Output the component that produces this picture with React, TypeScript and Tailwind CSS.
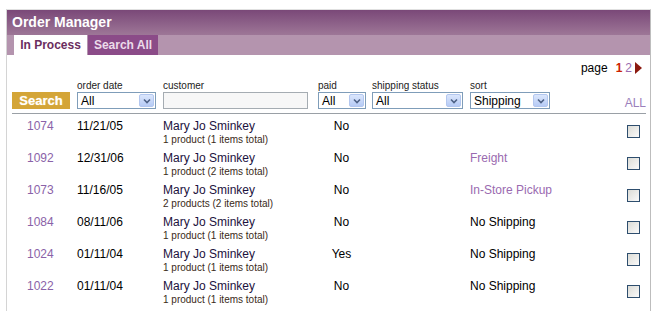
import React from "react";

const rows = [
  { id: "1074", date: "11/21/05", sub: "1 product (1 items total)", paid: "No", ship: "", shipPurple: false },
  { id: "1092", date: "12/31/06", sub: "1 product (2 items total)", paid: "No", ship: "Freight", shipPurple: true },
  { id: "1073", date: "11/16/05", sub: "2 products (2 items total)", paid: "No", ship: "In-Store Pickup", shipPurple: true },
  { id: "1084", date: "08/11/06", sub: "1 product (1 items total)", paid: "No", ship: "No Shipping", shipPurple: false },
  { id: "1024", date: "01/11/04", sub: "1 product (1 items total)", paid: "Yes", ship: "No Shipping", shipPurple: false },
  { id: "1022", date: "01/11/04", sub: "1 product (1 items total)", paid: "No", ship: "No Shipping", shipPurple: false },
];

function Select({ value, w }: { value: string; w: string }) {
  return (
    <div className={`${w} h-[17px] border border-[#7f9db9] bg-white flex items-center justify-between pl-[3px] pr-[1px]`}>
      <span className="text-[12px] leading-[14px] text-black">{value}</span>
      <span className="w-[15px] h-[13px] rounded-[2px] bg-gradient-to-b from-[#dbe6fc] to-[#b6cbf5] border border-[#b3c7ef] flex items-center justify-center">
        <svg width="8" height="6" viewBox="0 0 8 6">
          <path d="M1 1.5 L4 4.5 L7 1.5" stroke="#4d6185" strokeWidth="1.6" fill="none" />
        </svg>
      </span>
    </div>
  );
}

export default function App() {
  return (
    <div className="w-[659px] h-[311px] bg-white overflow-hidden pt-[9px] pl-[6px]" style={{ fontFamily: '"Liberation Sans", Arial, sans-serif' }}>
      <div className="w-[645px] h-[310px] border-l border-t border-r border-l-[#d4d4d4] border-t-[#e0e0e0] border-r-[#bdbdbd]">
        {/* header */}
        <div className="h-[45px] bg-gradient-to-b from-[#7a4878] via-[#9a7294] to-[#b696b0] flex flex-col">
          <div className="h-[25px] pl-[5px] pt-[4px] text-white font-bold text-[14px] leading-[16px]">Order Manager</div>
          <div className="flex pl-[7px] h-[20px] bg-[#b494ae]">
            <div className="w-[73px] h-[20px] bg-white text-[#6b2d5e] font-bold text-[12px] leading-[20px] text-center">In Process</div>
            <div className="w-[70px] h-[20px] bg-[#8b4b88] text-[#ecdcea] font-bold text-[12px] leading-[20px] text-center ml-[1px]">Search All</div>
          </div>
        </div>
        {/* body */}
        <div className="pl-[5px] pr-[4px] pt-[6px]">
          <div className="flex justify-end items-center h-[14px] pr-[4px] text-[12px] leading-[14px]">
            <span className="text-black">page</span>
            <span className="ml-[8px] text-[#cc2200] font-bold">1</span>
            <span className="ml-[3px] text-[#9a6ab0]">2</span>
            <svg className="ml-[3px]" width="7" height="12" viewBox="0 0 7 12">
              <path d="M0 0 L7 6 L0 12 Z" fill="#8b1a10" />
            </svg>
          </div>
          <div className="grid grid-cols-[65px_86px_155px_54px_98px_1fr] mt-[5px]">
            <div />
            <div className="text-[10px] leading-[12px] text-[#222]">order date</div>
            <div className="text-[10px] leading-[12px] text-[#222]">customer</div>
            <div className="text-[10px] leading-[12px] text-[#222]">paid</div>
            <div className="text-[10px] leading-[12px] text-[#222]">shipping status</div>
            <div className="text-[10px] leading-[12px] text-[#222]">sort</div>
            <div className="h-[17px] w-[58px] bg-[#d4a537] text-white font-bold text-[13px] leading-[17px] text-center" style={{ textShadow: "0 0 1px #f3dfa6" }}>Search</div>
            <Select value="All" w="w-[79px]" />
            <div className="w-[145px] h-[17px] border border-[#a5acb2] bg-[#f7f7f7]" />
            <Select value="All" w="w-[48px]" />
            <Select value="All" w="w-[91px]" />
            <div className="flex justify-between items-end">
              <Select value="Shipping" w="w-[80px]" />
              <span className="text-[12px] leading-[14px] text-[#9b80bb] mb-[-1px]">ALL</span>
            </div>
          </div>
          <div className="mt-[4px] border-t border-[#9aa0a6]" />
          {rows.map((r) => (
            <div key={r.id} className="grid grid-cols-[65px_86px_155px_54px_98px_1fr_auto] h-[32px] pt-[5px]">
              <div className="pl-[15px] text-[12px] leading-[14px] text-[#8a62a8]">{r.id}</div>
              <div className="text-[12px] leading-[14px] text-black">{r.date}</div>
              <div>
                <div className="text-[12px] leading-[14px] text-[#1c1240]">Mary Jo Sminkey</div>
                <div className="text-[10px] leading-[12px] text-[#3a2a18] mt-[1px]">{r.sub}</div>
              </div>
              <div className="w-[47px] text-center text-[12px] leading-[14px] text-black">{r.paid}</div>
              <div />
              <div className={`text-[12px] leading-[14px] ${r.shipPurple ? "text-[#9a6ab0]" : "text-black"}`}>{r.ship}</div>
              <div className="pr-[6px]">
                <div className="mt-[6px] w-[13px] h-[13px] border border-[#2e4e6e] bg-gradient-to-br from-[#dcdcd6] to-[#fafafa]" />
              </div>
            </div>
          ))}
        </div>
      </div>
    </div>
  );
}
